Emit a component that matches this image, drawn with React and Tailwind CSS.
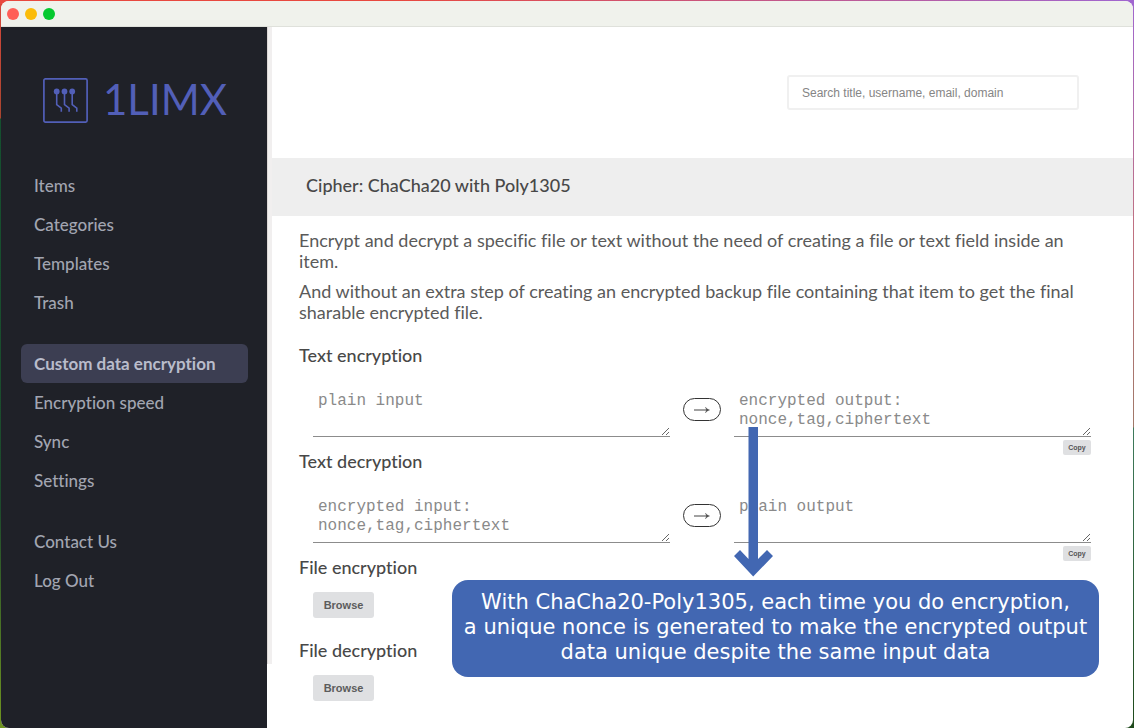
import { useId } from 'react'

const navGroups = [
  ['Items', 'Categories', 'Templates', 'Trash'],
  ['Custom data encryption', 'Encryption speed', 'Sync', 'Settings'],
  ['Contact Us', 'Log Out'],
]

const activeItem = 'Custom data encryption'

function TitleBar() {
  return (
    <div className="flex h-[26px] shrink-0 items-center gap-1.5 border-b border-[#dfe1db] bg-[#f0f2ec] pl-1.5">
      <span className="size-3 rounded-full bg-[#ff5f57]" />
      <span className="size-3 rounded-full bg-[#fbbc09]" />
      <span className="size-3 rounded-full bg-[#05c92f]" />
    </div>
  )
}

function Logo() {
  return (
    <a href="#" className="flex items-start gap-[15px] pl-[42px] text-[#525fb8]">
      <svg className="size-[45px]" viewBox="0 0 45 45" fill="none" stroke="currentColor">
        <rect x="0.9" y="0.9" width="43.2" height="43.2" rx="1.5" strokeWidth="1.7" />
        <g fill="currentColor" stroke="none">
          <circle cx="13.7" cy="13.4" r="2.9" />
          <circle cx="21.5" cy="13.4" r="2.9" />
          <circle cx="29.2" cy="13.4" r="2.9" />
        </g>
        <path
          strokeWidth="1.6"
          d="M13.7 14v12.5l4.6 3.7v3.6M21.5 14v12.5l4.6 3.7v3.6M29.2 14v12.5l4.6 3.7v3.6"
        />
      </svg>
      <span className="text-[42px] leading-[42px]">1LIMX</span>
    </a>
  )
}

function Sidebar() {
  return (
    <aside className="w-[266px] shrink-0 bg-[#1f2128] pt-[51px]">
      <Logo />
      <nav className="mt-[43px] flex flex-col gap-[22px] pr-[19px] pl-5">
        {navGroups.map((group) => (
          <ul key={group[0]}>
            {group.map((item) => (
              <li key={item}>
                <a
                  href="#"
                  className={
                    item === activeItem
                      ? 'flex h-[39px] items-center rounded-md bg-[#3c3e52] px-[13px] text-[17px] font-bold text-[#b9bccb]'
                      : 'flex h-[39px] items-center px-[13px] text-[17px] font-medium text-[#a2a5b1]'
                  }
                >
                  {item}
                </a>
              </li>
            ))}
          </ul>
        ))}
      </nav>
    </aside>
  )
}

function CipherArea({ label, placeholder, readOnly }) {
  return (
    <textarea
      aria-label={label}
      placeholder={placeholder}
      readOnly={readOnly}
      className="block h-[47px] w-full resize border-b border-[#8c8c8c] px-[5px] pt-0.5 font-['Liberation_Mono',monospace] text-base leading-[19px] text-[#484848] outline-none placeholder:text-[#8a8a8a]"
    />
  )
}

function TextCipher({ title, input, output }) {
  const id = useId()

  return (
    <section aria-labelledby={id} className="h-[106px]">
      <h2 id={id} className="text-lg leading-[21px] font-medium">{title}</h2>
      <div className="mt-6 grid grid-cols-[1fr_auto_1fr] items-start gap-x-[13px] pr-[15px] pl-[14px]">
        <CipherArea label={`${title} input`} placeholder={input} />
        <button
          type="button"
          aria-label={title}
          className="mt-2 grid h-[23px] w-[38px] place-items-center rounded-full border border-[#333]"
        >
          <svg className="h-2 w-4" viewBox="0 0 16 8" fill="none" stroke="#444">
            <path d="M0 4h14" />
            <path d="M11.5 1.2Q12.6 3.3 15.5 4Q12.6 4.7 11.5 6.8L12.6 4Z" fill="#444" strokeWidth="0.4" />
          </svg>
        </button>
        <div className="flex flex-col items-end gap-[3px]">
          <CipherArea label={`${title} output`} placeholder={output} readOnly />
          <button
            type="button"
            className="h-[15px] w-7 rounded-xs bg-[#dfe0e2] text-center font-['Liberation_Sans',sans-serif] text-[7px] leading-[15px] font-bold text-[#555]"
          >
            Copy
          </button>
        </div>
      </div>
    </section>
  )
}

function FileCipher({ title }) {
  return (
    <section className="h-[83px]">
      <h2 className="text-lg leading-[21px] font-medium">{title}</h2>
      <button
        type="button"
        className="mt-[14px] ml-[14px] block h-[26px] w-[61px] rounded-[3px] bg-[#dfe0e2] font-['Liberation_Sans',sans-serif] text-[11px] font-bold text-[#5c5c5c]"
      >
        Browse
      </button>
    </section>
  )
}

function Callout() {
  return (
    <div className="pointer-events-none absolute top-[400px] right-[34px] w-[647px]">
      <svg className="ml-[282px] h-[150px] w-[39px]" viewBox="0 0 39 150" fill="#4267b2">
        <path d="M14.5 0h9.500v132l9-9 6 6L19.2 149.500 0 129l6-6 8.500 9z" />
      </svg>
      <p className="mt-[3px] rounded-2xl bg-[#4267b2] pt-[10px] pb-3 text-center font-['DejaVu_Sans',sans-serif] text-[21px] leading-[25px] text-white">
        With ChaCha20-Poly1305, each time you do encryption,
        <br />
        a unique nonce is generated to make the encrypted output
        <br />
        data unique despite the same input data
      </p>
    </div>
  )
}

function EncryptionPage() {
  return (
    <main className="relative min-w-0 flex-1 text-[#484848]">
      <div className="flex justify-end pt-12 pr-[54px] pb-12">
        <input
          type="search"
          aria-label="Search"
          placeholder="Search title, username, email, domain"
          className="h-[35px] w-[292px] rounded-[3px] border-2 border-[#f0f0f0] px-[13px] font-['Liberation_Sans',sans-serif] text-xs outline-none placeholder:text-[#858585]"
        />
      </div>
      <div className="bg-[#eee] pr-4 pl-[34px]">
        <h1 className="pb-1 text-lg leading-[54px] font-medium">Cipher: ChaCha20 with Poly1305</h1>
      </div>
      <div className="pt-[14px] pr-[27px] pl-[27px]">
        <div className="space-y-[9px] text-lg leading-[21px] text-[#5a5a5a]">
          <p>
            Encrypt and decrypt a specific file or text without the need of creating a file or text
            field inside an item.
          </p>
          <p>
            And without an extra step of creating an encrypted backup file containing that item to
            get the final sharable encrypted file.
          </p>
        </div>
        <div className="mt-[22px]">
          <TextCipher
            title="Text encryption"
            input="plain input"
            output={'encrypted output:\nnonce,tag,ciphertext'}
          />
          <TextCipher
            title="Text decryption"
            input={'encrypted input:\nnonce,tag,ciphertext'}
            output="plain output"
          />
          <FileCipher title="File encryption" />
          <FileCipher title="File decryption" />
        </div>
      </div>
      <Callout />
    </main>
  )
}

function App() {
  return (
    <div className="flex min-h-screen flex-col bg-[linear-gradient(to_right,#e8493f,#e8493f_35%,#a066d0),linear-gradient(#d8483c,#a8452f_118px,#14502f_119px,#1d4a2c_70%,#6f9420),linear-gradient(#a066d0,#c07080_230px,#a07868_427px,#3f7a5c_428px,#1f4a1c)] bg-[size:100%_4px,50%_100%,100%_100%] bg-no-repeat px-px pt-px font-[Lato,sans-serif] [font-variant-ligatures:none]">
      <div className="flex flex-1 flex-col overflow-hidden rounded-lg bg-white">
        <TitleBar />
        <div className="flex flex-1">
          <Sidebar />
          <div className="mb-16 w-[5px] shrink-0 border-l border-[#dcd8d6] bg-[#f1efef]" />
          <EncryptionPage />
        </div>
      </div>
    </div>
  )
}

export default App
